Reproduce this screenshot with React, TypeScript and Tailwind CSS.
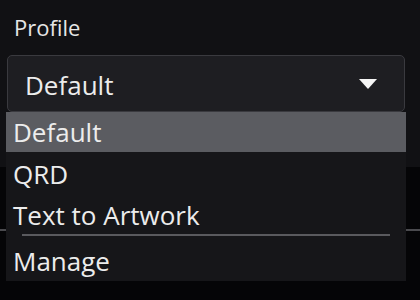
import React from "react";

export default function App() {
  const font = { fontFamily: '"Open Sans", "Noto Sans", sans-serif' };
  return (
    <div className="relative w-[420px] h-[300px] overflow-hidden bg-[#050507] text-[#ececec]" style={font}>
      <div className="h-[167px] bg-[#111114] pt-[12px] pl-[7px] pr-[15px]">
        <div className="pl-[7px] text-[22px] leading-[30px] text-[#e6e6e6]">Profile</div>
        <div className="mt-[13px] h-[57px] rounded-[5px] border border-[#3a3a3f] bg-[#1e1e22] flex items-center justify-between pl-[17px] pr-[27px]">
          <span className="text-[26px] leading-none pt-[2px]">Default</span>
          <svg width="18" height="10" viewBox="0 0 18 10">
            <path d="M0 0 H18 L9 10 Z" fill="#f5f5f5" />
          </svg>
        </div>
      </div>
      <div className="mt-[62px] h-[2px] bg-[#4a4a4e]" />
      <div className="absolute left-[6px] top-[112px] w-[400px] h-[169px] bg-[#161619] flex flex-col">
        <div className="h-[40px] bg-[#5b5c61] flex items-center pl-[7px] text-[26px] leading-none">Default</div>
        <div className="h-[43px] flex items-center pl-[7px] text-[26px] leading-none">QRD</div>
        <div className="h-[39px] flex items-center pl-[7px] text-[26px] leading-none">Text to Artwork</div>
        <div className="mx-[16px] h-[2px] bg-[#5a5a5e]" />
        <div className="h-[45px] flex items-center pl-[7px] pt-[4px] text-[26px] leading-none">Manage</div>
      </div>
    </div>
  );
}
